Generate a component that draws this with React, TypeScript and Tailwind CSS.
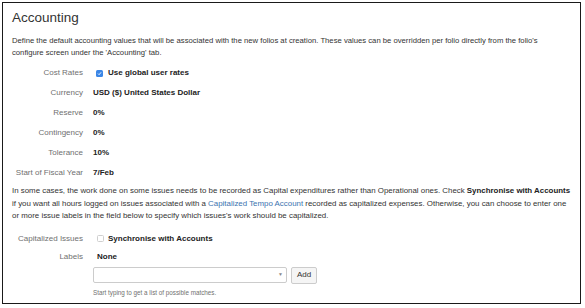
import React from 'react';

const rows = [
  { label: 'Currency', value: 'USD ($) United States Dollar' },
  { label: 'Reserve', value: '0%' },
  { label: 'Contingency', value: '0%' },
  { label: 'Tolerance', value: '10%' },
  { label: 'Start of Fiscal Year', value: '7/Feb' },
];

const Checkbox: React.FC<{ checked?: boolean }> = ({ checked }) =>
  checked ? (
    <span className="inline-flex w-[7px] h-[7px] rounded-[1.5px] bg-[#3b86e6] items-center justify-center">
      <svg width="5" height="5" viewBox="0 0 10 10">
        <path d="M2 5.2 L4.2 7.4 L8.2 2.6" fill="none" stroke="white" strokeWidth="1.8" />
      </svg>
    </span>
  ) : (
    <span className="inline-block w-[7px] h-[7px] rounded-[1.5px] border border-[#cfcfcf] bg-white" />
  );

const Row: React.FC<{ label: string; children: React.ReactNode }> = ({ label, children }) => (
  <div className="flex items-center h-[20px]">
    <div className="w-[71px] text-right text-[#707070] text-[8px] whitespace-nowrap">{label}</div>
    <div className="ml-[10px] flex items-center text-[8px] font-bold text-[#222] whitespace-nowrap">{children}</div>
  </div>
);

export default function App() {
  return (
    <div
      className="w-[585px] h-[308px] bg-white pt-[2px] pl-[2px]"
      style={{ fontFamily: '"Liberation Sans", Arial, sans-serif' }}
    >
      <div className="w-[579px] h-[302px] border-[1.5px] border-[#1a1a1a] pl-[9px] pr-[4px] pt-[6px] text-[#333]">
        <h1 className="text-[13.5px] leading-[18px] text-[#333]">Accounting</h1>
        <p className="mt-[8px] text-[7.7px] leading-[12px] text-[#333] whitespace-nowrap">
          Define the default accounting values that will be associated with the new folios at creation. These values can
          be overridden per folio directly from the folio's
          <br />
          configure screen under the 'Accounting' tab.
        </p>

        <div className="mt-[4px]">
          <Row label="Cost Rates">
            <span className="ml-[3px] flex items-center">
              <Checkbox checked />
            </span>
            <span className="ml-[5px]">Use global user rates</span>
          </Row>
          {rows.map(r => (
            <Row key={r.label} label={r.label}>
              {r.value}
            </Row>
          ))}
        </div>

        <p className="mt-[2px] text-[7.9px] leading-[12.5px] text-[#333] whitespace-nowrap">
          In some cases, the work done on some issues needs to be recorded as Capital expenditures rather than Operational
          ones. Check <b className="text-[#222]">Synchronise with Accounts</b>
          <br />
          if you want all hours logged on issues associated with a{' '}
          <span className="text-[#3b73af]">Capitalized Tempo Account</span> recorded as capitalized expenses. Otherwise,
          you can choose to enter one
          <br />
          or more issue labels in the field below to specify which issues's work should be capitalized.
        </p>

        <div className="mt-[6px]">
          <Row label="Capitalized Issues">
            <span className="ml-[4px] flex items-center">
              <Checkbox />
            </span>
            <span className="ml-[4px]">Synchronise with Accounts</span>
          </Row>
          <div className="flex items-center h-[17px]">
            <div className="w-[71px] text-right text-[#707070] text-[8px]">Labels</div>
            <div className="ml-[14px] text-[8px] font-bold text-[#222]">None</div>
          </div>
          <div className="ml-[81px] mt-[1px] flex items-center gap-[4px]">
            <div className="w-[194px] h-[16px] border border-[#cccccc] rounded-[2px] bg-white flex items-center justify-end pr-[3px]">
              <span className="text-[5px] text-[#888]">▼</span>
            </div>
            <button className="h-[17px] px-[5px] border border-[#cccccc] rounded-[2px] bg-[#f5f5f5] text-[8px] text-[#333]">
              Add
            </button>
          </div>
          <div className="ml-[81px] mt-[4px] text-[6.3px] text-[#707070]">Start typing to get a list of possible matches.</div>
        </div>
      </div>
    </div>
  );
}
